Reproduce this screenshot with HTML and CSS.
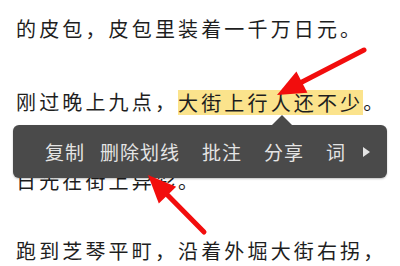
FILE: index.html
```html
<!DOCTYPE html>
<html lang="zh-CN">
<head>
<meta charset="utf-8">
<link rel="stylesheet" href="styles.css">
</head>
<body>
<main class="page">
  <p class="line l1">的皮包，皮包里装着一千万日元。</p>
  <p class="line l2">刚过晚上九点，<span class="hl">大街上行人还不少</span>。</p>
  <p class="line l3">日光在街上异彩。</p>
  <p class="line l4">跑到芝琴平町，沿着外堀大街右拐，</p>

  <div class="popup">
    <span class="item item-first">复制</span>
    <span class="item">删除划线</span>
    <span class="item">批注</span>
    <span class="item">分享</span>
    <span class="item">词</span>
    <span class="more"></span>
  </div>

  <svg class="arrows" width="400" height="266" viewBox="0 0 400 266">
    <line x1="364" y1="50" x2="302" y2="82" stroke="#f20d0d" stroke-width="5" stroke-linecap="round"/>
    <polygon points="277,95 307.4,92.8 296.4,71.4" fill="#f20d0d"/>
    <line x1="204" y1="232" x2="167.5" y2="195" stroke="#f20d0d" stroke-width="5" stroke-linecap="round"/>
    <polygon points="148,175 176.2,186.8 158.8,203.6" fill="#f20d0d"/>
  </svg>
</main>
</body>
</html>
```
FILE: styles.css
```css
html, body {
  margin: 0;
  padding: 0;
  background: #ffffff;
}

.page {
  position: relative;
  width: 400px;
  height: 266px;
  overflow: hidden;
  padding: 16px 0 0 16px;
  box-sizing: border-box;
  font-family: "Noto Sans CJK SC", "Noto Sans", sans-serif;
  color: #1e1e1e;
}

.line {
  margin: 0;
  font-size: 20px;
  letter-spacing: 3.15px;
  line-height: 25px;
  white-space: nowrap;
}

.l2 { margin-top: 48px; }
.l3 { margin-top: 53px; }
.l4 { margin-top: 45px; }

.hl {
  display: inline-block;
  background: #fbe38c;
  line-height: 25px;
  vertical-align: top;
  margin-top: 1px;
}

.popup {
  position: absolute;
  left: 13px;
  top: 125px;
  width: 374px;
  height: 53px;
  box-sizing: border-box;
  background: #4a4a4a;
  border-radius: 6px;
  display: flex;
  align-items: center;
  gap: 22px;
  padding-left: 32px;
  color: #e4e4e4;
  font-size: 19px;
  letter-spacing: 1px;
  box-shadow: 0 1px 2px rgba(0,0,0,0.25);
}

.popup::before {
  content: "";
  position: absolute;
  left: 259px;
  top: -10px;
  border-left: 10px solid transparent;
  border-right: 10px solid transparent;
  border-bottom: 10px solid #4a4a4a;
}

.item {
  line-height: 25px;
}

.item-first {
  margin-right: -7px;
}

.more {
  width: 0;
  height: 0;
  margin-left: -5px;
  border-top: 5px solid transparent;
  border-bottom: 5px solid transparent;
  border-left: 7px solid #e4e4e4;
}

.arrows {
  position: absolute;
  left: 0;
  top: 0;
}
```
